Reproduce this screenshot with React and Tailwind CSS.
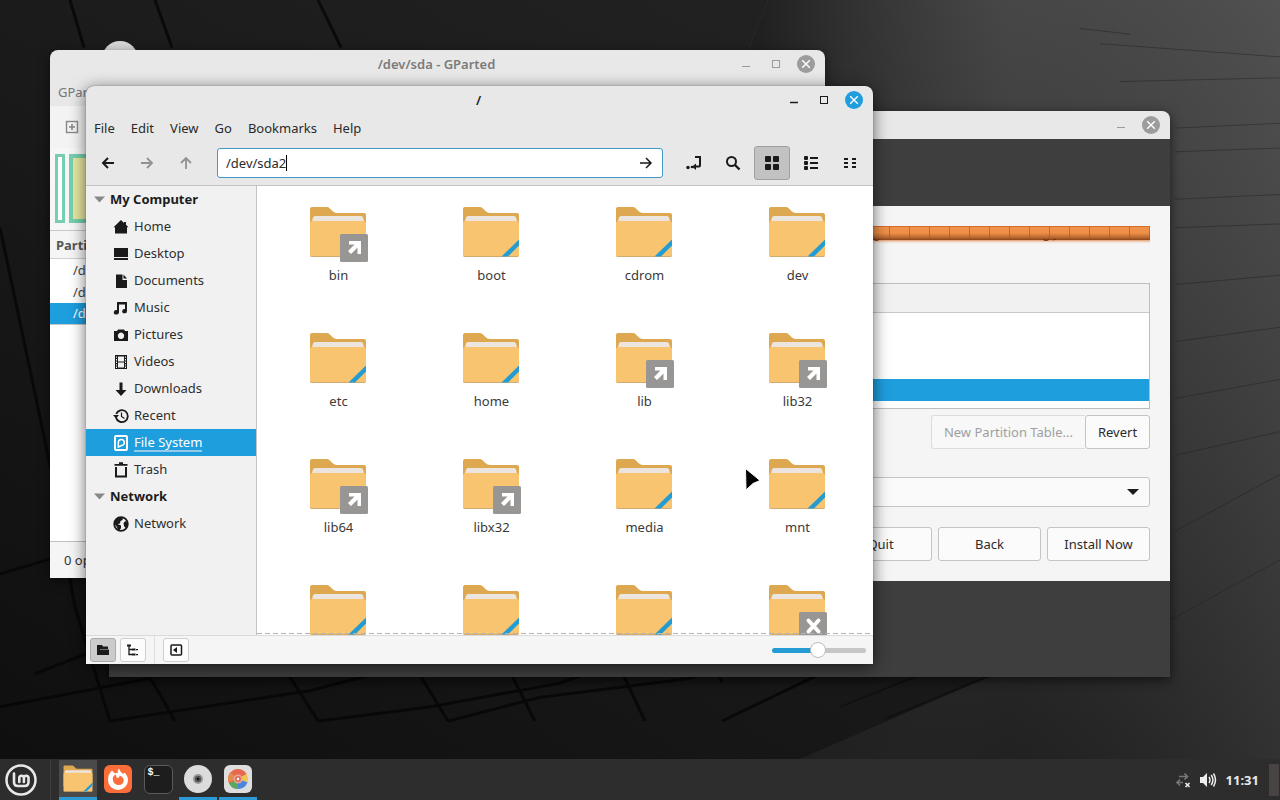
import React from "react";

function Wallpaper() {
  return (
    <svg className="absolute inset-0 h-full w-full" viewBox="0 0 1280 800" preserveAspectRatio="none" aria-hidden="true">
      <defs>
        <linearGradient id="base" x1="0" y1="1" x2="1" y2="0">
          <stop offset="0" stopColor="#0f0f0f" />
          <stop offset=".5" stopColor="#1b1b1b" />
          <stop offset="1" stopColor="#262626" />
        </linearGradient>
        <linearGradient id="slab" x1="0" y1="0" x2="0" y2="1">
          <stop offset="0" stopColor="#4a4a4a" />
          <stop offset=".35" stopColor="#3c3c3c" />
          <stop offset=".7" stopColor="#2d2d2d" />
          <stop offset="1" stopColor="#202020" />
        </linearGradient>
        <linearGradient id="sheen" x1="0" y1="0" x2="1" y2="0">
          <stop offset="0" stopColor="#1b1b1b" />
          <stop offset=".22" stopColor="#222" stopOpacity=".6" />
          <stop offset=".5" stopColor="#2c2c2c" stopOpacity=".1" />
          <stop offset="1" stopColor="#666" stopOpacity=".25" />
        </linearGradient>
      </defs>
      <rect width="1280" height="800" fill="url(#base)" />
      <path d="M768 0H1280V800H800L1069 677L780 400L735 90Z" fill="url(#slab)" />
      <path d="M768 0H1280V800H800L1069 677L780 400L735 90Z" fill="url(#sheen)" />
      <g stroke="#060606" strokeWidth="3" fill="none" opacity=".8">
        <path d="M70 0L84 50M155 0L172 50M318 0L341 50" />
        <path d="M0 240L52 500L75 640L110 760M0 605L86 578M35 710L109 680M0 745L150 715" />
        <path d="M130 677L175 760M268 677L318 760M400 677L448 760M495 677L535 760M608 677L645 760M705 677L722 720" />
        <path d="M110 760L310 728L450 690M318 760L430 745L560 720L640 690M448 760L540 735L690 715L780 677M722 760L860 690" />
      </g>
      <path d="M1069 677L885 758M1000 677L840 745" stroke="#111" strokeWidth="2" fill="none" />
      <g stroke="#1e1e1e" strokeWidth="1" opacity=".45" fill="none">
        <path d="M1080 30L1130 36M1100 46L1280 60M1120 86L1280 82M1175 135L1280 130M1175 160L1280 156M1175 210L1280 205M1175 240L1280 236M1175 300L1280 290M1175 360L1280 345M1175 420L1280 400M1175 480L1280 455M1175 560L1280 500M1130 677L1280 590" />
      </g>
    </svg>
  );
}

function TitleBar({ title, active, maximize = true }) {
  const ink = active ? "#1c1c1c" : "#9a9a9a";
  return (
    <header className="flex h-7 shrink-0 items-center justify-end pr-[10px]">
      <h2 className={"flex-1 pl-[86px] text-center text-[13px] font-semibold " + (active ? "text-[#222]" : "text-[#7b7b7b]")}>{title}</h2>
      <div className="flex items-center gap-3">
        <button aria-label="Minimize" className="h-[18px] w-[18px]">
          <svg width="18" height="18"><path d="M5 11.5h8" stroke={ink} strokeWidth={active ? 1.6 : 1} /></svg>
        </button>
        {maximize && (
          <button aria-label="Maximize" className="h-[18px] w-[18px]">
            <svg width="18" height="18"><rect x="5.5" y="5.5" width="7" height="7" fill="none" stroke={ink} /></svg>
          </button>
        )}
        <button aria-label="Close" className="h-[18px] w-[18px]">
          <svg width="18" height="18">
            <circle cx="9" cy="9" r="9" fill={active ? "#1f9ede" : "#9c9c9c"} />
            <path d="M5.2 5.2l7.6 7.6M12.8 5.2l-7.6 7.6" stroke="#fff" strokeWidth="1.4" />
          </svg>
        </button>
      </div>
    </header>
  );
}

function GParted() {
  return (
    <section className="absolute left-[50px] top-[50px] flex h-[528px] w-[775px] flex-col overflow-hidden rounded-t-lg bg-[#e8e8e8] shadow-[0_3px_12px_rgba(0,0,0,0.5)]">
      <TitleBar title="/dev/sda - GParted" />
      <nav className="flex h-7 shrink-0 items-center gap-4 px-2 text-[#777]">
        <button>GParted</button>
        <button>Edit</button>
        <button>View</button>
      </nav>
      <div className="flex h-[42px] shrink-0 items-center bg-[#f3f3f3] px-[15px]">
        <button aria-label="New partition">
          <svg width="14" height="14" fill="none" stroke="#888"><rect x="1.5" y="1.5" width="11" height="11" strokeWidth="1.4" /><path d="M7 4v6M4 7h6" strokeWidth="1.6" /></svg>
        </button>
      </div>
      <div className="flex h-[82px] shrink-0 gap-1 bg-[#f6f6f6] px-[5px] pb-[7px] pt-[6px]">
        <div className="w-[10px] border-[3px] border-[#76ceae] bg-white" />
        <div className="flex-1 border-4 border-[#76ceae] bg-[#e6e6a0]" />
      </div>
      <div className="flex-1 bg-white">
        <table className="w-full border-collapse border-y border-[#c8c8c8] text-left">
          <thead>
            <tr className="h-7 border-b border-[#d0d0d0] bg-[#f5f5f5]"><th className="px-[6px] text-[#555]">Partition</th></tr>
          </thead>
          <tbody className="text-[#444]">
            <tr className="h-[22px]"><td className="pl-[23px]">/dev/sda1</td></tr>
            <tr className="h-[22px]"><td className="pl-[23px]">/dev/sda2</td></tr>
            <tr className="h-[22px] bg-[#1f9ede] text-white"><td className="pl-[23px]">/dev/sda3</td></tr>
          </tbody>
        </table>
      </div>
      <footer className="flex h-[37px] shrink-0 items-center border-t border-[#c0c0c0] bg-[#f5f5f5] px-[14px] text-[#333]">0 operations pending</footer>
    </section>
  );
}

function Installer() {
  const btn = "h-[34px] rounded-[3px] border border-[#c4c4c4] bg-[#fbfbfb] text-[#2a2a2a]";
  return (
    <section className="absolute left-[109px] top-[111px] flex h-[566px] w-[1061px] flex-col overflow-hidden rounded-t-lg bg-[#3e3e3e] shadow-[0_3px_12px_rgba(0,0,0,0.6)]">
      <div className="bg-[#e8e8e8]">
        <TitleBar title="Install" maximize={false} />
      </div>
      <div className="h-[67px] shrink-0" />
      <div className="flex shrink-0 flex-col bg-[#f5f5f5] p-5">
        <svg className="h-[18px] w-full" aria-hidden="true">
          <defs>
            <linearGradient id="disk" x1="0" y1="0" x2="0" y2="1">
              <stop offset="0" stopColor="#c4571f" />
              <stop offset=".1" stopColor="#f0924a" />
              <stop offset=".5" stopColor="#ef8f47" />
              <stop offset=".85" stopColor="#b0652f" />
              <stop offset="1" stopColor="#8f4216" />
            </linearGradient>
            <linearGradient id="glow" x1="0" y1="0" x2="0" y2="1">
              <stop offset="0" stopColor="#e39a68" />
              <stop offset="1" stopColor="#f5e4d8" stopOpacity="0" />
            </linearGradient>
            <pattern id="cells" x="2" width="20" height="18" patternUnits="userSpaceOnUse"><path d="M18.5 1v12" stroke="#a8501c" opacity=".6" /></pattern>
          </defs>
          <rect width="100%" height="14" fill="url(#disk)" />
          <rect width="100%" height="14" fill="url(#cells)" />
          <rect y="14" width="100%" height="4" fill="url(#glow)" />
          <path d="M745 13q3 3 5 0M914 13q3 3 6 0m4 1l3-1" stroke="#7a3510" strokeWidth="1.2" fill="none" />
        </svg>
        <div className="mt-[39px] h-[126px] border border-[#bdbdbd] bg-white">
          <div className="h-[29px] border-b border-[#c8c8c8] bg-[#f1f1f1]" />
          <div className="mt-[66px] h-[22px] bg-[#1f9ede]" />
        </div>
        <div className="mt-[6px] flex justify-end">
          <button disabled className="h-[34px] rounded-l-[3px] border border-r-0 border-[#dcdcdc] bg-[#f8f8f8] px-3 text-[#a0a0a0]">New Partition Table...</button>
          <button className={btn + " w-[65px]"}>Revert</button>
        </div>
        <button aria-label="Boot loader device" className="mt-7 flex h-[30px] items-center justify-end rounded-[3px] border border-[#c4c4c4] bg-[#fafafa] pr-[10px]">
          <svg width="12" height="6"><path d="M0 0h12L6 6z" fill="#1c1c1c" /></svg>
        </button>
        <div className="mt-5 flex justify-end gap-[6px]">
          <button className={btn + " w-[103px]"}>Quit</button>
          <button className={btn + " w-[103px]"}>Back</button>
          <button className={btn + " w-[103px]"}>Install Now</button>
        </div>
      </div>
    </section>
  );
}

const K = "#1a1a1a";
const icons = {
  Home: <path d="M8 1L.5 8.200H2V14.500h12V8.200h1.500L13 5.800V3h-2v1z" fill={K} />,
  Desktop: <><path d="M1 2h14v9H1z" fill={K} /><path d="M1 12h14v2H1z" fill={K} /></>,
  Documents: <><path d="M3 1.5h6.5V7H14v8H3z" fill={K} /><path d="M10.5 1.5L14 5.5h-3.5z" fill={K} /></>,
  Music: <path d="M4 2h10v9.200a2.400 2.200 0 1 1-2-2.200V4.500H6v7.700A2.600 2.300 0 1 1 4 10z" fill={K} />,
  Pictures: <path fillRule="evenodd" d="M5 2.500h6L12 4h3v10H1V4h3zM8 5.600a3.200 3.200 0 1 0 .01 0z" fill={K} />,
  Videos: <path fillRule="evenodd" d="M2 1h12v14H2zM5 2.4v5h6v-5zM5 8.6v5h6v-5zM3 2.4v1.4h1V2.4zM3 5v1.4h1V5zM3 7.6V9h1V7.6zM3 10.2v1.4h1v-1.4zM3 12.6V14h1v-1.4zM12 2.4v1.4h1V2.4zM12 5v1.4h1V5zM12 7.6V9h1V7.6zM12 10.2v1.4h1v-1.4zM12 12.6V14h1v-1.4z" fill={K} />,
  Downloads: <path d="M6.5 1.5h3V9H13.5L8 15 2.5 9h4z" fill={K} />,
  Recent: <><path d="M3 9.5A6 6 0 1 0 3.200 6" fill="none" stroke={K} strokeWidth="1.8" /><path d="M0 7h6L3 10.6z" fill={K} /><path d="M8.500 4.500v4l3 2" fill="none" stroke={K} strokeWidth="1.2" /></>,
  "File System": <><rect x="2" y="1" width="12" height="14" rx="1" fill="none" stroke="#fff" strokeWidth="2" /><path d="M5.300 12V7.600A3 3 0 1 1 8.500 10.500L5.300 12z" fill="none" stroke="#fff" strokeWidth="1.5" /></>,
  Trash: <><path d="M1.500 2.800h13M6 1.200h4" stroke={K} strokeWidth="1.8" /><path d="M3 5v9.500h10V5" fill="none" stroke={K} strokeWidth="2" /></>,
  Network: <><circle cx="8" cy="8" r="6.800" fill="none" stroke={K} strokeWidth="1.8" /><path d="M2 5l4-3.500h4L9.500 4 7.500 5 7 7.500 4.500 8 8 9.500 8 12 6.500 14.500 4.500 13.500 4 11 1.500 8zM10.500 7l2-2 2 1.500v3l-2 2.500-1.500-2z" fill={K} /></>,
};

function Place({ name, active }) {
  return (
    <li>
      <a href="#" className={"flex h-[27px] items-center gap-[5px] pl-[27px] " + (active ? "bg-[#1f9ede] text-white" : "text-[#2e2e2e]")}>
        <svg width="16" height="16" viewBox="0 0 16 16" aria-hidden="true">{icons[name]}</svg>
        <span className={"leading-[16px] " + (active ? "border-b-2 border-[#94c9e8]" : "border-b-2 border-transparent")}>{name}</span>
      </a>
    </li>
  );
}

function Group({ name, children }) {
  return (
    <div>
      <h3 className="flex h-[27px] items-center gap-[5px] pl-2 font-bold text-[#1c1c1c]">
        <svg width="11" height="7" aria-hidden="true"><path d="M0 .5h11L5.500 6.500z" fill="#888" /></svg>
        <span className="border-b-2 border-transparent leading-[16px]">{name}</span>
      </h3>
      <ul>{children}</ul>
    </div>
  );
}

function FolderArt({ emblem }) {
  return (
    <>
      <path d="M4 9a2 2 0 0 1 2-2h14.500q2 0 3.400 1.400l2.800 2.900q1.700 1.700 4 1.700H58a2 2 0 0 1 2 2v32H4z" fill="#dda84f" />
      <path d="M9 16h46q1.500 0 2 1.500L58.500 23h-53L7 17.500Q7.500 16 9 16z" fill="#ece5df" />
      <path d="M4 22.500L5.500 21h53l1.500 1.500V55a2 2 0 0 1-2 2H6a2 2 0 0 1-2-2z" fill="#f8c470" />
      <path d="M4 54.500q.4 1.500 2 1.500h52q1.600 0 2-1.500v.5a2 2 0 0 1-2 2H6a2 2 0 0 1-2-2z" fill="#d3ab70" />
      {emblem === "plain" && <path d="M60 39.500v6L49 56.500h-6.500z" fill="#239cd3" />}
      {(emblem === "link" || emblem === "lock") && <rect x="34" y="34" width="28" height="28" rx="1.500" fill="#989694" />}
      {emblem === "link" && <path d="M43 41h12v13h-3.500v-6.500L45 54l-3-3 6.500-6.500H43z" fill="#fff" />}
      {emblem === "lock" && <path d="M43.500 42.500l10 11M53.500 42.500l-10 11" stroke="#fff" strokeWidth="4" strokeLinecap="round" />}
    </>
  );
}

const folders = [
  ["bin", "link"], ["boot", "plain"], ["cdrom", "plain"], ["dev", "plain"],
  ["etc", "plain"], ["home", "plain"], ["lib", "link"], ["lib32", "link"],
  ["lib64", "link"], ["libx32", "link"], ["media", "plain"], ["mnt", "plain"],
  ["", "plain"], ["", "plain"], ["", "plain"], ["", "lock"],
];

function Tool({ label, active, children }) {
  return (
    <button aria-label={label} className={"flex h-[34px] w-9 items-center justify-center rounded-[3px] border " + (active ? "border-[#a0a0a0] bg-[#c2c2c2]" : "border-transparent")}>
      <svg width="18" height="18" viewBox="0 0 18 18" fill="none" stroke={K} strokeWidth="2" aria-hidden="true">{children}</svg>
    </button>
  );
}

function SmallTool({ label, active, children }) {
  return (
    <button aria-label={label} className={"flex h-6 w-[26px] items-center justify-center rounded-[3px] border " + (active ? "border-[#ababab] bg-[#cbcbcb]" : "border-[#cfcfcf] bg-[#fcfcfc]")}>
      <svg width="14" height="14" viewBox="0 0 14 14" aria-hidden="true">{children}</svg>
    </button>
  );
}

function FileManager() {
  return (
    <section className="absolute left-[86px] top-[86px] flex h-[578px] w-[787px] flex-col overflow-hidden rounded-t-lg bg-[#e8e8e8] shadow-[0_3px_16px_rgba(0,0,0,0.6),0_0_1px_rgba(0,0,0,0.7)]">
      <TitleBar title="/" active />
      <nav className="flex h-7 shrink-0 items-center gap-4 px-2 text-[#2a2a2a]">
        {["File", "Edit", "View", "Go", "Bookmarks", "Help"].map((m) => <button key={m}>{m}</button>)}
      </nav>
      <div className="flex h-[43px] shrink-0 items-center pb-[2px] pl-1 pr-[5px]">
        <div className="flex gap-[3px]">
          <Tool label="Back"><path d="M15 9H4M9 4L4 9l5 5" /></Tool>
          <Tool label="Forward"><path d="M3 9h11M9 4l5 5-5 5" stroke="#929292" strokeWidth="1.800" /></Tool>
          <Tool label="Up"><path d="M9 15V4M4 9l5-5 5 5" stroke="#929292" strokeWidth="1.800" /></Tool>
        </div>
        <div className="ml-[13px] flex h-[30px] flex-1 items-center rounded-[3px] border border-[#3f9ac6] bg-white pl-2 pr-2">
          <span className="flex flex-1 items-center">
            <input aria-label="Location" defaultValue="/dev/sda2" className="w-[60px] bg-transparent text-[#2a2a2a] outline-none" />
            <span className="h-4 w-px bg-black" />
          </span>
          <button aria-label="Go to location">
            <svg width="16" height="16" fill="none" stroke={K} strokeWidth="1.500"><path d="M2 8h11M8 3l5 5-5 5" /></svg>
          </button>
        </div>
        <div className="ml-[13px] flex gap-[3px]">
          <Tool label="Toggle location entry"><path d="M10 3h5v8.500q0 1-1 1h-4" /><path d="M7 12.800l4-3.300v6.600z" fill={K} stroke="none" /><circle cx="3" cy="13.500" r="1.700" fill={K} stroke="none" /><circle cx="7" cy="13" r="1.300" fill={K} stroke="none" /></Tool>
          <Tool label="Search"><circle cx="7.500" cy="7.500" r="4.500" /><path d="M11 11l4.500 4.500" strokeWidth="2.400" /></Tool>
          <Tool label="Icon view" active><g fill={K} stroke="none"><rect x="2" y="2" width="6" height="6" rx="1" /><rect x="10" y="2" width="6" height="6" rx="1" /><rect x="2" y="10" width="6" height="6" rx="1" /><rect x="10" y="10" width="6" height="6" rx="1" /></g></Tool>
          <Tool label="List view"><g fill={K} stroke="none"><rect x="2" y="2" width="4" height="4" rx="1" /><rect x="2" y="7" width="4" height="4" rx="1" /><rect x="2" y="12" width="4" height="4" rx="1" /><path d="M8 3h8v2H8zM8 8h8v2H8zM8 13h8v2H8z" /></g></Tool>
          <Tool label="Compact view"><path d="M3 5h4M11 5h4M3 9h4M11 9h4M3 13h4M11 13h4" /></Tool>
        </div>
      </div>
      <div className="flex min-h-0 flex-1 border-t border-[#c4c4c4]">
        <aside className="w-[171px] shrink-0 border-r border-[#c4c4c4] bg-[#f1f1f1]">
          <Group name="My Computer">
            {["Home", "Desktop", "Documents", "Music", "Pictures", "Videos", "Downloads", "Recent", "File System", "Trash"].map((n) => <Place key={n} name={n} active={n === "File System"} />)}
          </Group>
          <Group name="Network"><Place name="Network" /></Group>
        </aside>
        <main className="relative flex-1 overflow-hidden bg-white pl-[5px]">
          <ul className="grid auto-rows-[126px] grid-cols-[repeat(4,153px)] pt-[14px]">
            {folders.map(([name, emblem], i) => (
              <li key={i} className="flex flex-col items-center text-[#3a3a3a]">
                <svg className="h-16 w-[65px]" viewBox="0 0 65 64" aria-hidden="true"><FolderArt emblem={emblem} /></svg>
                {name && <span className="leading-[22px]">{name}</span>}
              </li>
            ))}
          </ul>
          <div className="absolute bottom-px left-0 right-0 h-px bg-[repeating-linear-gradient(90deg,#b4b4b4_0_5px,transparent_5px_8px)]" />
        </main>
      </div>
      <footer className="flex h-[29px] shrink-0 items-center border-t border-[#dadada] bg-[#f5f5f5] pl-1 pr-[7px]">
        <div className="flex gap-1">
          <SmallTool label="Places" active><path d="M1 2h5l1 1.500h5V6H4L2.500 12H1zM3.500 6.500H13V12H2z" fill={K} /></SmallTool>
          <SmallTool label="Tree"><path d="M3 2v9.500h3M3 6.500h3" fill="none" stroke={K} strokeWidth="1.300" /><path d="M1 1.500h4v2H1zM6 5.500h3.500v2H6zM10 6h2v1.200h-2zM6 10.500h3.500v2H6zM10 11h2v1.200h-2z" fill={K} /></SmallTool>
        </div>
        <div className="mx-2 h-7 w-px bg-[#dedede]" />
        <SmallTool label="Hide sidebar"><rect x="2" y="2" width="10.500" height="10" rx="1" fill="none" stroke={K} strokeWidth="1.500" /><path d="M8 4v6L4 7z" fill={K} /></SmallTool>
        <label className="relative ml-auto flex h-[18px] w-[94px] items-center">
          <input aria-label="Zoom" type="range" min="0" max="100" defaultValue="50" className="absolute inset-0 h-full w-full opacity-0" />
          <span className="h-[5px] w-[42px] rounded-l-full bg-[#239cd3]" />
          <span className="relative -mx-1 h-4 w-4 shrink-0 rounded-full border border-[#bcbcbc] bg-white" />
          <span className="h-[5px] flex-1 rounded-r-full bg-[#c6c6c6]" />
        </label>
      </footer>
    </section>
  );
}

function Task({ label, running, active, children }) {
  return (
    <button aria-label={label} className={"flex h-10 w-[38px] items-start justify-center border-b-[3px] pt-[5px] " + (running ? "border-[#2a9bd6] " : "border-transparent ") + (active ? "bg-[#4a4a4a]" : "")}>
      {children}
    </button>
  );
}

function Taskbar() {
  return (
    <footer className="relative flex h-[41px] shrink-0 items-end bg-[#2d2d2d] pl-[5px] pr-px">
      <button aria-label="Menu" className="mb-1 h-8 w-8">
        <svg width="32" height="32" viewBox="0 0 32 32" fill="none" stroke="#e8e8e8">
          <circle cx="16" cy="16" r="14.500" strokeWidth="2.500" />
          <path d="M9 9.500V18q0 4 4 4h6.500q4 0 4-4v-4a2.300 2.300 0 0 0-4.600 0V18M18.900 14a2.300 2.300 0 0 0-4.600 0V18" strokeWidth="2.600" strokeLinecap="round" />
        </svg>
      </button>
      <span className="ml-[13px] mr-2 h-10 w-px bg-[#3c3c3c]" />
      <div className="flex gap-[2px]">
        <Task label="Files" running active>
          <svg width="30" height="27" viewBox="3 6 58 52"><FolderArt emblem="plain" /></svg>
        </Task>
        <Task label="Firefox">
          <svg width="28" height="28" viewBox="0 0 28 28"><rect width="28" height="28" rx="6" fill="#fc6d39" /><path d="M8 5.500l3 3q1.500-.8 3.300-.6Q13 5.500 15 3.500q1 3.500 4.500 5.500l1-1.500Q24 11 24 15a10 10 0 0 1-20 0Q4 9 8 5.500z" fill="#fff" /><path d="M11.500 9.500q-3 1.500-2.700 4.700Q9.400 20 15 20q4 0 4.700-4 .4-4-4.200-5.500.3 2.500-2.700 2.500z" fill="#fc6d39" /></svg>
        </Task>
        <Task label="Terminal">
          <span className="flex h-[29px] w-[29px] rounded-[6px] border border-[#5a5a5a] bg-[#1d1d1d] pl-[3px] pt-px font-['Liberation_Mono'] text-[10px] font-bold leading-[11px] text-white">$_</span>
        </Task>
        <Task label="GParted" running>
          <svg width="28" height="28" viewBox="0 0 28 28"><circle cx="14" cy="14" r="14" fill="#dcdcdc" /><circle cx="14" cy="14" r="5" fill="#9a9a9a" /><circle cx="14" cy="14" r="3.200" fill="#555" /><circle cx="14" cy="14" r="1.300" fill="#111" /></svg>
        </Task>
        <Task label="Installer" running>
          <svg width="28" height="28" viewBox="0 0 28 28"><rect width="28" height="28" rx="6" fill="#dedede" /><path d="M14 14L5.300 19A10 10 0 0 1 22.700 9z" fill="#e8684f" /><path d="M14 14L4.400 17A10 10 0 0 1 6.500 7.400z" fill="#e58a4d" /><path d="M14 14L5 18.500A10 10 0 0 0 14 24z" fill="#5aa85c" /><path d="M14 14v10a10 10 0 0 0 9.500-7z" fill="#4b86dd" /><path d="M14 14l9.500 3A10 10 0 0 0 22.700 9z" fill="#f2c24b" /><circle cx="14" cy="14" r="4.500" fill="#e9a795" /><circle cx="14" cy="14" r="3" fill="#d9705c" /><circle cx="14" cy="14" r="1.200" fill="#fff" /></svg>
        </Task>
      </div>
      <div className="ml-auto flex h-10 items-center">
        <svg width="16" height="18" viewBox="0 0 16 18" fill="none" stroke="#777" strokeWidth="1.600" aria-hidden="true">
          <path d="M4 5.500h8.500M9.500 2.500l3 3-3 3M2 11.500h6M5 8.500l-3 3 3 3" /><path d="M10.500 12l4 4M14.500 12l-4 4" stroke="#eee" />
        </svg>
        <svg className="ml-[9px]" width="17" height="16" viewBox="0 0 17 16" fill="none" stroke="#eee" strokeWidth="1.500" aria-hidden="true">
          <path d="M0 5h3l4-4v14l-4-4H0z" fill="#eee" stroke="none" /><path d="M9 5q2 3 0 6M11.200 3q3.500 5 0 10M13.500 1.500q4 6.500 0 13" />
        </svg>
        <time className="ml-[9px] text-[13px] font-bold text-[#e8e8e8]">11:31</time>
        <span className="ml-[10px] h-8 w-[10px] bg-[#474443]" />
      </div>
    </footer>
  );
}

export default function App() {
  return (
    <div className="flex h-screen flex-col overflow-hidden bg-[#151515] font-['Noto_Sans','Liberation_Sans',sans-serif] text-[13px] leading-[18px]">
      <div className="relative flex-1">
        <Wallpaper />
        <div className="absolute left-[102px] top-[41px] h-9 w-9 rounded-full bg-[#d8d8d8]" />
        <Installer />
        <GParted />
        <FileManager />
        <svg className="absolute left-[744px] top-[466px]" width="20" height="26" aria-hidden="true">
          <path d="M1.500 2.500L16 14.500 9 17.500 2 24z" fill="#000" stroke="#fff" strokeWidth="1" />
        </svg>
      </div>
      <Taskbar />
    </div>
  );
}
